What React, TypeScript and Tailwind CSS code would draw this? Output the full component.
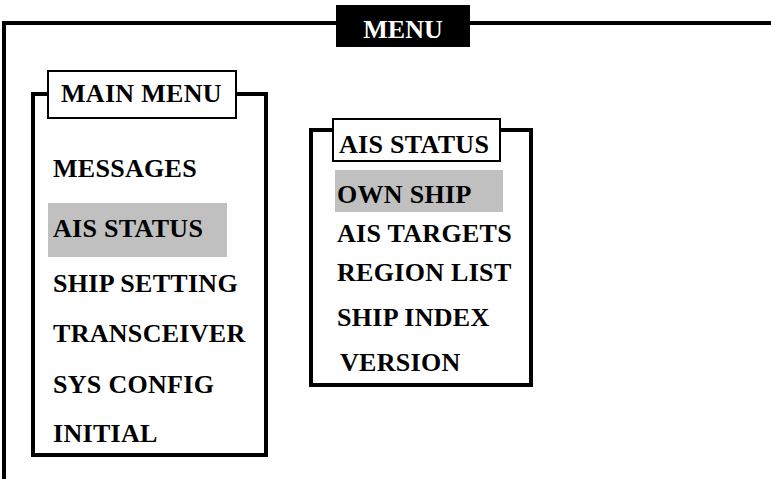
const serif = { fontFamily: '"Liberation Serif", "Times New Roman", serif' }

type Item = { label: string; row: string; active?: boolean }

const mainItems: Item[] = [
  { label: 'MESSAGES', row: 'mt-[25px] h-[50px] pt-[12px]' },
  { label: 'AIS STATUS', row: 'mt-[9px] h-[54px] pt-[13px]', active: true },
  { label: 'SHIP SETTING', row: 'h-[50px] pt-[14px]' },
  { label: 'TRANSCEIVER', row: 'h-[50px] pt-[14px]' },
  { label: 'SYS CONFIG', row: 'h-[50px] pt-[15px]' },
  { label: 'INITIAL', row: 'h-[46px] pt-[14px]' },
]

const aisItems: Item[] = [
  { label: 'OWN SHIP', row: 'mt-[8px] h-[42px] pt-[12px]', active: true },
  { label: 'AIS TARGETS', row: 'h-[40px] pt-[9px]' },
  { label: 'REGION LIST', row: 'h-[40px] pt-[8px]' },
  { label: 'SHIP INDEX', row: 'h-[45px] pt-[13px]' },
  { label: 'VERSION', row: 'h-[45px] pt-[13px] pl-[5px]' },
]

export default function App() {
  return (
    <div className="w-[771px] h-[479px] overflow-hidden bg-white text-black font-bold text-[26px] tracking-[0.3px]" style={serif}>
      {/* outer frame, right and bottom run off the page */}
      <div className="ml-[2px] mt-[21px] h-[458px] border-l-4 border-t-4 border-black">
        <div className="ml-[330px] -mt-[20px] w-[134px] h-[42px] bg-black text-white text-center leading-[26px] pt-[12px] tracking-normal">
          MENU
        </div>

        <div className="flex items-start">
          {/* main menu */}
          <div className="ml-[25px] mt-[45px] w-[237px] h-[365px] border-4 border-black shrink-0">
            <div className="ml-[12px] -mt-[26px] w-[190px] h-[49px] border-2 border-black bg-white pl-[12px] pt-[9px] leading-[26px] whitespace-nowrap">
              MAIN MENU
            </div>
            {mainItems.map(item => (
              <div
                key={item.label}
                className={`ml-[13px] w-[179px] pl-[5px] leading-[26px] whitespace-nowrap ${item.row} ${
                  item.active ? 'bg-[#c0c0c0]' : ''
                }`}
              >
                {item.label}
              </div>
            ))}
          </div>

          {/* AIS status submenu */}
          <div className="ml-[41px] mt-[81px] w-[224px] h-[259px] border-4 border-black shrink-0">
            <div className="ml-[19px] -mt-[14px] w-[169px] h-[44px] border-2 border-black bg-white pl-[5px] pt-[12px] leading-[26px] whitespace-nowrap">
              AIS STATUS
            </div>
            {aisItems.map(item => (
              <div
                key={item.label}
                className={`ml-[22px] w-[168px] pl-[2px] leading-[26px] whitespace-nowrap ${item.row} ${
                  item.active ? 'bg-[#c0c0c0]' : ''
                }`}
              >
                {item.label}
              </div>
            ))}
          </div>
        </div>
      </div>
    </div>
  )
}
